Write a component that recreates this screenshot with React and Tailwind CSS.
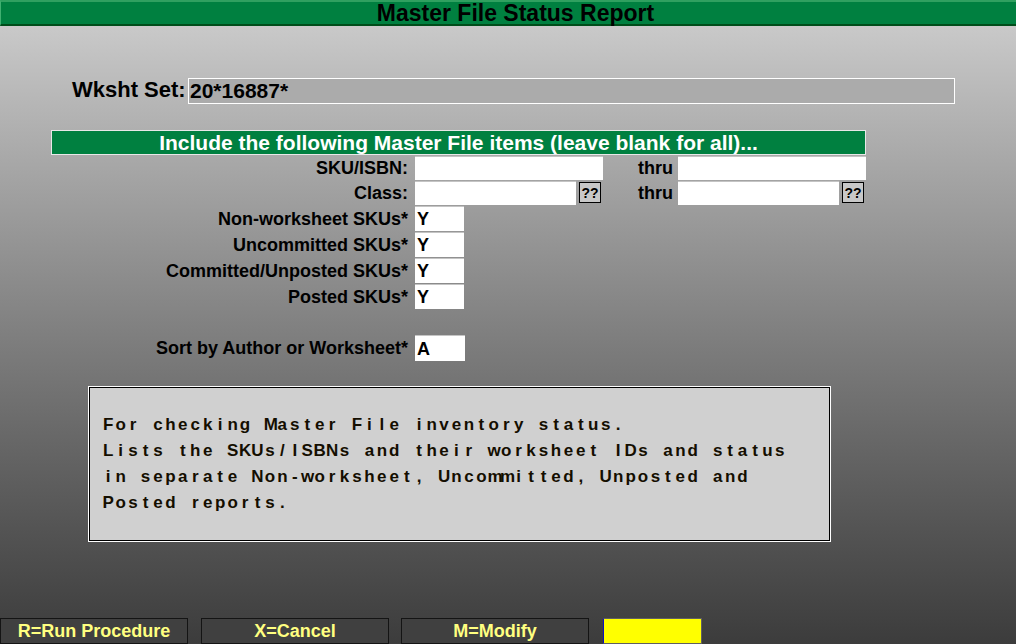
const DESC = [
  'For checking Master File inventory status.',
  'Lists the SKUs/ISBNs and their worksheet IDs and status',
  'in separate Non-worksheet, Uncommitted, Unposted and',
  'Posted reports.',
];

const FLAGS = [
  { label: 'Non-worksheet SKUs*', value: 'Y' },
  { label: 'Uncommitted SKUs*', value: 'Y' },
  { label: 'Committed/Unposted SKUs*', value: 'Y' },
  { label: 'Posted SKUs*', value: 'Y' },
];

const Lookup = () => (
  <div className="w-[22px] h-[21px] mt-[1px] border border-black bg-[#c8c8c8] flex items-center justify-center text-[14px] leading-none text-black">
    ??
  </div>
);

const FixedLine = ({ text }) => (
  <div className="flex h-[26px] items-center">
    {text.split('').map((ch, i) => (
      <span key={i} className="inline-block w-[12.45px] text-center shrink-0">
        {ch === ' ' ? '\u00a0' : ch}
      </span>
    ))}
  </div>
);

const FooterButton = ({ label, className = '' }) => (
  <div
    className={`h-[26px] w-[188px] bg-[#404040] border border-[#141414] flex items-center justify-center text-[18px] font-bold text-[#ffff80] ${className}`}
  >
    {label}
  </div>
);

export default function App() {
  return (
    <div className="w-[1016px] h-[644px] flex flex-col overflow-hidden font-['Liberation_Sans',Arial,sans-serif]">
      {/* Title */}
      <div className="h-[26px] shrink-0 bg-[#008040] border-t-2 border-t-[#30a060] border-b-2 border-b-[#004d1a] border-l border-l-[#40b070] flex items-center justify-center pl-[14px]">
        <span className="text-[23px] font-bold leading-none text-black">Master File Status Report</span>
      </div>

      <div className="flex-1 flex flex-col bg-linear-to-b from-[#c9c9c9] to-[#3c3c3c] text-black">
        {/* Wksht set */}
        <div className="mt-[52px] ml-[72px] flex items-center h-[26px]">
          <span className="w-[116px] text-[22px] font-bold leading-none -mt-[2px]">Wksht Set:</span>
          <div className="w-[767px] h-[26px] border border-white bg-[#ababab] flex items-center pl-[1px] text-[21px] font-bold leading-none">
            <span className="-mt-[2px]">20*16887*</span>
          </div>
        </div>

        {/* Section header */}
        <div className="mt-[26px] ml-[51px] w-[815px] h-[25px] bg-[#008040] border border-[#e8e8e8] flex items-center justify-center text-white text-[21px] font-bold leading-none">
          Include the following Master File items (leave blank for all)...
        </div>

        {/* SKU / ISBN */}
        <div className="mt-[1px] flex h-[25px] text-[18px] font-bold leading-none">
          <span className="w-[408px] text-right self-center -mt-[1px]">SKU/ISBN:</span>
          <div className="ml-[7px] w-[188px] h-[24px] bg-white border-t border-t-[#c4c4c4]" />
          <span className="w-[70px] text-right self-center -mt-[1px]">thru</span>
          <div className="ml-[5px] w-[188px] h-[24px] bg-white border-t border-t-[#c4c4c4]" />
        </div>

        {/* Class */}
        <div className="flex h-[25px] text-[18px] font-bold leading-none">
          <span className="w-[408px] text-right self-center -mt-[1px]">Class:</span>
          <div className="ml-[7px] w-[161px] h-[24px] bg-white border-t border-t-[#c4c4c4]" />
          <div className="ml-[3px]">
            <Lookup />
          </div>
          <span className="w-[72px] text-right self-center -mt-[1px]">thru</span>
          <div className="ml-[5px] w-[161px] h-[24px] bg-white border-t border-t-[#c4c4c4]" />
          <div className="ml-[3px]">
            <Lookup />
          </div>
        </div>

        {/* Flags */}
        {FLAGS.map((f) => (
          <div key={f.label} className="flex h-[26px] text-[18px] font-bold leading-none">
            <span className="w-[408px] text-right self-center -mt-[1px]">{f.label}</span>
            <div className="ml-[7px] w-[49px] h-[25px] bg-white border-t border-t-[#c4c4c4] flex items-center pl-[2px]">
              {f.value}
            </div>
          </div>
        ))}

        {/* Sort */}
        <div className="mt-[25px] flex h-[26px] text-[18px] font-bold leading-none">
          <span className="w-[408px] text-right self-center -mt-[1px]">Sort by Author or Worksheet*</span>
          <div className="ml-[7px] w-[50px] h-[26px] bg-white border-t border-t-[#c4c4c4] flex items-center pl-[2px]">
            A
          </div>
        </div>

        {/* Description */}
        <div className="mt-[25px] ml-[88px] w-[743px] h-[156px] border border-white">
          <div className="w-full h-full border border-black bg-[#d0d0d0] pt-[23px] pl-[12px] text-[17px] font-bold leading-none text-[#140e00]">
            {DESC.map((line, i) => (
              <FixedLine key={i} text={line} />
            ))}
          </div>
        </div>

        {/* Footer */}
        <div className="mt-auto flex h-[26px]">
          <FooterButton label="R=Run Procedure" />
          <FooterButton label="X=Cancel" className="ml-[13px]" />
          <FooterButton label="M=Modify" className="ml-[12px]" />
          <div className="ml-[14px] w-[99px] h-[26px] bg-[#ffff00] border border-[#606060] border-l-[#1010c0]" />
        </div>
      </div>
    </div>
  );
}
